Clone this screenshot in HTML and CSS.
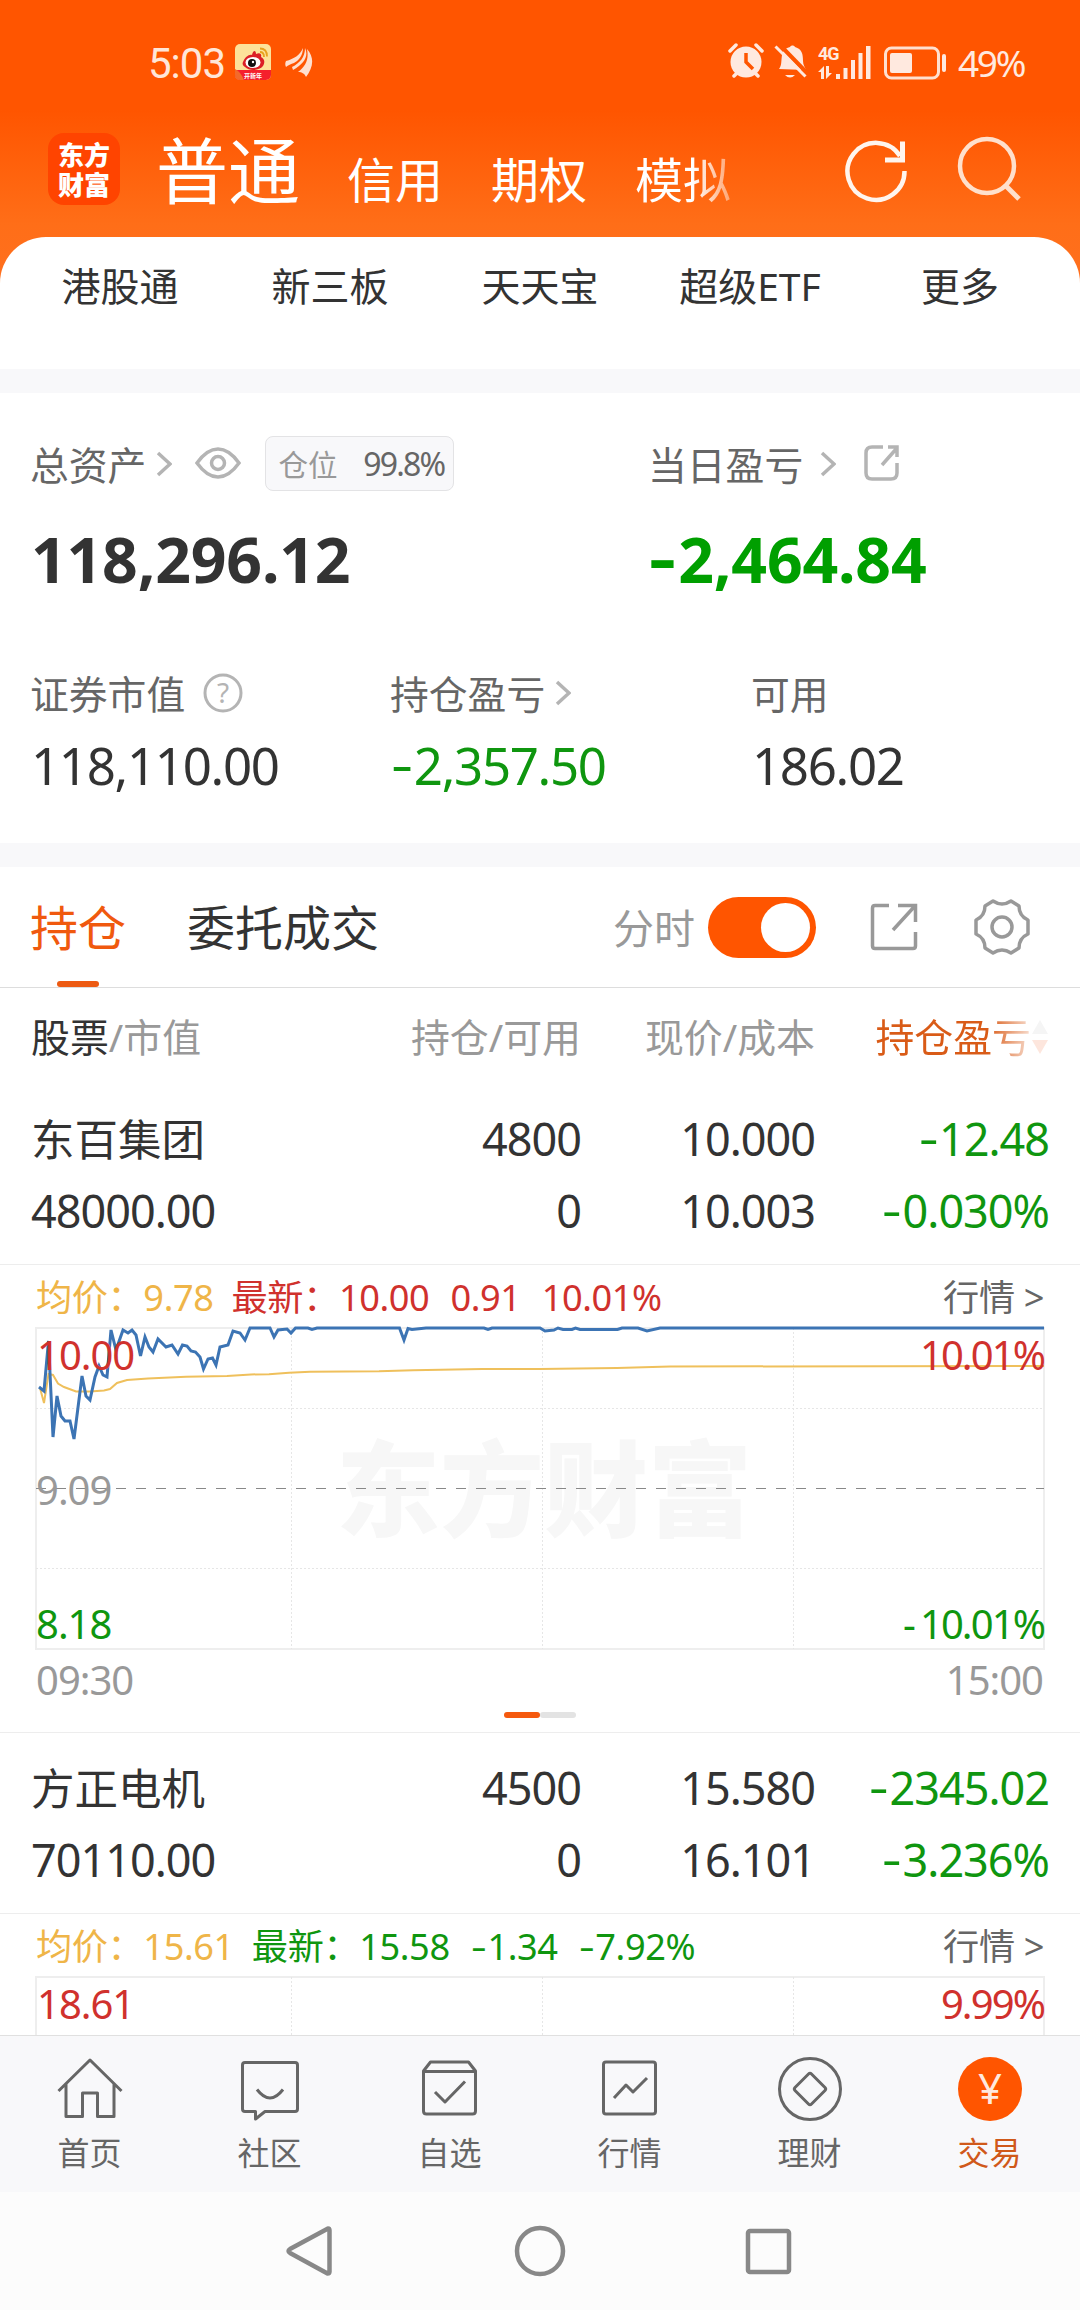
FILE: index.html
```html
<!DOCTYPE html>
<html lang="zh-CN">
<head>
<meta charset="utf-8">
<title>交易</title>
<link rel="stylesheet" href="styles.css">
</head>
<body>
<div class="screen">
  <header class="top">
    <div class="status">
      <span class="clock">5:03</span>
      <svg class="weibo" width="36" height="36" viewBox="0 0 36 36">
        <defs><clipPath id="wb"><rect width="36" height="36" rx="5"/></clipPath></defs>
        <g clip-path="url(#wb)">
          <rect width="36" height="36" fill="#fde29a"/>
          <path d="M0 26h36v10H0z" fill="#f5202c"/>
          <path d="M0 25q6 3 9 11H0z" fill="#f36a2a"/>
          <path d="M8 18c2-5 6-8 9-7 1-5 4-5 4-1 4-2 6 0 5 3 4 2 4 6 2 9-4 5-14 5-18 1-2-1-3-3-2-5z" fill="#dc1f26"/>
          <ellipse cx="18" cy="18.500" rx="7.500" ry="5.500" fill="#fff"/>
          <circle cx="17" cy="19" r="4" fill="#111"/><circle cx="18" cy="18" r="1.200" fill="#fff"/>
          <path d="M25 8q4 0 4 5M25 4.500q7 0 7 8" fill="none" stroke="#e8a21f" stroke-width="1.800"/>
        </g>
        <text x="18" y="33.500" class="weibo-text">开新年</text>
      </svg>
      <svg class="leaf" width="28" height="32" viewBox="0 0 28 32">
        <path d="M1 14C9 12 15 8 18 1c0 8-5 13-9 15-3 1-6 2-8 4-1-2-1-4 0-6z M20 1c4 8-1 16-12 22l-1-3C15 16 20 10 20 1z M22 2c8 9 6 19-1 28-1-3-4-5-8-5 8-6 11-13 9-23z"/>
      </svg>
      <div class="status-right">
        <svg width="310" height="50" viewBox="0 -6 310 50" fill="#ffe9df">
          <!-- alarm -->
          <circle cx="18" cy="20" r="15.500"/>
          <path d="M2 9L8 3M28 3l6 6M6 34l5-5M30 34l-5-5" stroke="#ffe9df" stroke-width="3.500" stroke-linecap="round"/>
          <path d="M18 11v9l7 7" stroke="#ff5500" stroke-width="3.500" fill="none"/>
          <!-- muted bell -->
          <path d="M51 27c3-4 2-8 3-14 1-5 4-7 8-8 1-2 4-2 5 0 7 2 8 7 8 14 0 4 2 6 3 9z"/>
          <path d="M57 33h10q-5 5-10 0z"/>
          <path d="M50 1l31 32" stroke="#ff5500" stroke-width="4"/>
          <path d="M47.500 4.500l30 30" stroke="#ffe9df" stroke-width="3"/>
          <text x="90" y="18" class="net">4G</text>
          <path d="M90 30l6-6v13h-3v-7zM98 24h3v7h3l-6 6zM108 32h4v5h-4z"/>
          <path d="M115.500 26h4v11h-4zM123 18h4v19h-4zM130.500 11h4v26h-4zM138 4h4.500v33H138z"/>
          <rect x="157.500" y="6" width="53" height="30" rx="6" fill="none" stroke="#ffe0cf" stroke-width="3"/>
          <rect x="162" y="11" width="22" height="20" rx="2"/>
          <rect x="214" y="12" width="4" height="18" rx="2"/>
          <text x="230" y="35" class="battery">49%</text>
        </svg>
      </div>
    </div>
    <div class="titlebar">
      <div class="logo">东方<br>财富</div>
      <nav class="modes">
        <span class="mode active">普通</span><span class="mode">信用</span><span class="mode">期权</span><span class="mode last">模拟</span>
      </nav>
      <svg class="actions" width="190" height="70" viewBox="0 0 190 70" fill="none">
        <path d="M63.500 36A28.500 28.500 0 1 1 59 21" stroke="#fff5ee" stroke-width="4.500"/>
        <path d="M61.500 6.500v18.500H44" stroke="#fff5ee" stroke-width="5"/>
        <circle cx="146" cy="31" r="27" stroke="#ffe0cc" stroke-width="4.500"/>
        <path d="M165 51l13 13" stroke="#ffe0cc" stroke-width="5"/>
      </svg>
    </div>
  </header>

  <main class="content">
    <nav class="shortcuts"><span>港股通</span><span>新三板</span><span>天天宝</span><span>超级ETF</span><span>更多</span></nav>

    <section class="assets">
      <div class="totals">
        <div class="total">
          <div class="label">总资产
            <svg class="chev near" viewBox="0 0 16 26"><path d="M2 2l12 11L2 24"/></svg>
            <svg class="eye" viewBox="0 0 46 32"><path d="M2 16Q12 2 23 2t21 14Q34 30 23 30T2 16z"/><circle cx="23" cy="16" r="6.500"/></svg>
            <span class="badge"><span>仓位</span><b>99.8%</b></span>
          </div>
          <div class="big">118,296.12</div>
        </div>
        <div class="total">
          <div class="label">当日盈亏
            <svg class="chev far" viewBox="0 0 16 26"><path d="M2 2l12 11L2 24"/></svg>
            <svg class="share-s" viewBox="0 0 36 36"><path d="M19 2H8Q2 2 2 8v20q0 6 6 6h19q6 0 6-6V18M18 20L33 3M24 2h9v10"/></svg>
          </div>
          <div class="big green"><i class="neg">-</i>2,464.84</div>
        </div>
      </div>
      <div class="stats">
        <div><div class="label">证券市值
          <svg class="help" viewBox="0 0 40 40"><circle cx="20" cy="20" r="18"/><text x="20" y="29.500">?</text></svg></div>
          <div class="value">118,110.00</div></div>
        <div><div class="label">持仓盈亏
          <svg class="chev near" viewBox="0 0 16 26"><path d="M2 2l12 11L2 24"/></svg></div>
          <div class="value green"><i class="neg">-</i>2,357.50</div></div>
        <div><div class="label">可用</div><div class="value">186.02</div></div>
      </div>
    </section>

    <section class="positions">
      <div class="tabs">
        <span class="tab on">持仓</span><span class="tab">委托成交</span>
        <span class="timeline">分时</span><span class="switch"></span>
        <svg class="share-l" viewBox="0 0 48 48"><path d="M19 2.500H5q-2.500 0-2.500 2.500v38q0 2.500 2.500 2.500h38q2.500 0 2.500-2.500V29M23 27L44 4M28 2.500h17.500V19"/></svg>
        <svg class="gear" viewBox="0 0 56 56"><path d="M19 2q9 6 18 0l8 5q0 10 9 14v14q-9 4-9 14l-8 5q-9-6-18 0l-8-5q0-10-9-14V21q9-4 9-14z"/><circle cx="28" cy="28" r="10"/></svg>
      </div>
      <div class="cols head">
        <span><em>股票</em>/市值</span><span>持仓/可用</span><span>现价/成本</span>
        <span class="sorted"><strong>持仓盈亏</strong><svg width="18" height="36" viewBox="0 0 18 36"><path d="M9 1l8 14H1z" fill="#f5f5f5"/><path d="M9 35L1 21h16z" fill="#fde6dd"/></svg></span>
      </div>

      <article class="holding">
        <div class="cols row"><span class="name">东百集团</span><span>4800</span><span>10.000</span><span class="green"><i class="neg">-</i>12.48</span></div>
        <div class="cols row"><span>48000.00</span><span>0</span><span>10.003</span><span class="green"><i class="neg">-</i>0.030%</span></div>
      </article>
      <div class="quote">
        <div class="legend"><span class="avg">均价：9.78</span><span class="red">最新：10.00</span><span class="red">0.91</span><span class="red">10.01%</span><span class="more">行情 &gt;</span></div>
        <svg class="chart" width="1080" height="392" viewBox="0 0 1080 392">
          <text x="336" y="209" class="mark">东方财富</text>
          <path class="frame" d="M36 8h1008v321H36z"/>
          <path class="grid" d="M36 88.500h1008M36 248.500h1008M291.500 8v321M542.500 8v321M793.500 8v321"/>
          <path class="mid" d="M36 168.500h1008"/>
          <path class="avgline" d="M40 68L44 83L48.500 54L53 55L58 63.500L64 67L76 71.500L90 71.500L104 70.500L110 69L117 63L127 60L148 58.500L186 56.700L227 56L251 54.400L269 54.300L289 52.700L310 51.700L379 51.300L413 50.300L482 49L540 49L617 48L670 46.500L1044 46"/>
          <path class="price" d="M39 67L44 71L48.500 21L53 117L57 76L61 96L65 101L70 101L74 119L82 56L86 76L90 80L95 57L99 46L103 55L107 57L111 10L116 30L123 10L128 13L132 10L136 15L140.500 36L145 17L149 27L153 32L158 19L166 27L172 25L178 34L182.500 25L187 26L191 31L195.500 32L200 37L203.500 49L208 39L212.500 38L216 45L220 27L228 25L233 11L240 13L245 20L250 8L270 8L274 17L278 10L287 9L291 13L295.500 8L308 8L312 9.500L317 8L399.500 8L404 20L408 8.500L412 9.500L426 8L484 8L488 9.500L492 8L540 8L545 11L554 10L558 8L563 9.500L572 9.500L575.500 8L580 9.500L617.500 9.500L622 8L638 8L647 11L660 8L1044 8"/>
          <g class="axis">
            <text x="37" y="50" class="r">10.00</text><text x="36" y="185" class="g">9.09</text><text x="36" y="319" class="n">8.18</text><text x="36" y="375" class="g">09:30</text>
            <g text-anchor="end"><text x="1044" y="50" class="r pct">10.01%</text><text x="1044" y="319" class="n pct"><tspan class="dash">-</tspan>10.01%</text><text x="1043" y="375" class="g">15:00</text></g>
          </g>
        </svg>
        <div class="pager"><i></i><i></i></div>
      </div>

      <article class="holding">
        <div class="cols row"><span class="name">方正电机</span><span>4500</span><span>15.580</span><span class="green"><i class="neg">-</i>2345.02</span></div>
        <div class="cols row"><span>70110.00</span><span>0</span><span>16.101</span><span class="green"><i class="neg">-</i>3.236%</span></div>
      </article>
      <div class="quote">
        <div class="legend"><span class="avg">均价：15.61</span><span class="green">最新：15.58</span><span class="green"><i class="neg">-</i>1.34</span><span class="green"><i class="neg">-</i>7.92%</span><span class="more">行情 &gt;</span></div>
        <svg class="chart" width="1080" height="66" viewBox="0 0 1080 66">
          <path class="frame" d="M36 80V8h1008v72"/>
          <path class="grid" d="M291.500 8v70M542.500 8v70M793.500 8v70"/>
          <g class="axis"><text x="37" y="50" class="r">18.61</text><text x="1044" y="50" class="r pct" text-anchor="end">9.99%</text></g>
        </svg>
      </div>
    </section>
  </main>

  <nav class="tabbar">
    <div><svg viewBox="0 0 68 68"><path d="M2.500 36L34 5l31.500 31M10 29v32.500h16.500V38h15v23.500H58V29"/></svg>首页</div>
    <div><svg viewBox="0 0 68 68"><path d="M9 7.500h50q2.500 0 2.500 2.500v44q0 2.500-2.500 2.500H29l-9.500 7.500V56.500H9q-2.500 0-2.500-2.500V10q0-2.500 2.500-2.500zM21 34.500q13 17 26 0"/></svg>社区</div>
    <div><svg viewBox="0 0 68 68"><path d="M7.500 16l7-9h38l7 9v40q0 3-3 3h-46q-3 0-3-3zM7.500 16.500h52M19 37l10 10 20-20.500"/></svg>自选</div>
    <div><svg viewBox="0 0 68 68"><rect x="7.500" y="7" width="52" height="52" rx="2.500"/><path d="M18 43l12-13 7 7 14-14"/></svg>行情</div>
    <div><svg viewBox="0 0 68 68"><circle cx="34" cy="34" r="30.500"/><path d="M32.500 19q1.500-1.500 3 0l13.500 13.500q1.500 1.500 0 3L35.500 49q-1.500 1.500-3 0L19 35.500q-1.500-1.500 0-3z"/></svg>理财</div>
    <div class="current"><svg viewBox="0 0 68 68"><circle cx="34" cy="34" r="32"/><text x="34" y="49">¥</text></svg>交易</div>
  </nav>

  <footer class="sysnav">
    <svg viewBox="0 0 52 52"><path d="M43 3.500q1.500 0 1.500 2v41q0 2-2 2L5 28q-3-2 0-4z"/></svg>
    <svg viewBox="0 0 52 52"><circle cx="26" cy="26" r="23"/></svg>
    <svg viewBox="0 0 52 52"><rect x="5" y="6" width="41" height="41" rx="2"/></svg>
  </footer>
</div>
</body>
</html>
```
FILE: styles.css
```css
* { box-sizing: border-box; }
body {
  margin: 0;
  font-family: "Noto Sans", "Noto Sans CJK SC", sans-serif;
  color: #333;
}
svg { flex: none; display: block; }
.green { color: #0f960f; }
.red { color: #d0312d; }

/* Minus sign, drawn a little wider and higher than the plain hyphen */
.neg {
  display: inline-block;
  font-style: normal;
  transform: translateY(-.04em) scaleX(1.35);
  transform-origin: left;
  margin-right: .15em;
}

.screen {
  width: 1080px;
  height: 2310px;
  display: flex;
  flex-direction: column;
  overflow: hidden;
  background: linear-gradient(#ff5500 0, #ff5500 110px, #ff6e18 225px, #ff7020 300px);
}

/* Header */
.top { height: 237px; flex: none; }
.status { height: 125px; padding-left: 148px; display: flex; align-items: flex-start; }
.clock { width: 87px; font-size: 42px; line-height: 128px; letter-spacing: -1px; color: #ffe6d8; font-family: Roboto, sans-serif; }
.weibo { margin-top: 44px; }
.weibo-text { font-size: 6px; font-weight: 700; fill: #fff; text-anchor: middle; }
.leaf { margin: 47px 0 0 14px; fill: #ffe0cf; }
.status-right { margin: 36px 42px 0 auto; }
.net { font: 700 18px Roboto, sans-serif; letter-spacing: -1px; }
.battery { font: 37px "Noto Sans", sans-serif; letter-spacing: -2.300px; }
.titlebar { display: flex; padding-left: 48px; height: 100px; }
.logo {
  width: 72px; height: 72px; margin-top: 8px; padding-top: 6px;
  border-radius: 16px; background: #ff4400; color: #fff; text-align: center;
  font: 900 26px/30px "Noto Sans CJK SC", sans-serif;
}
.modes { display: flex; align-items: baseline; gap: 48px; width: 660px; margin: -7px 0 0 36px; color: #fff; font-size: 48px; line-height: 104px; }
.mode.last {
  color: transparent;
  background: linear-gradient(90deg, #fff 60%, rgba(255,255,255,.4) 100%);
  -webkit-background-clip: text;
  background-clip: text;
}
.mode.active { font-size: 72px; margin-right: -1px; }
.actions { margin: 10px 0 0 25px; }

/* Content */
.content { height: 1798px; flex: none; overflow: hidden; background: #fff; border-radius: 46px 46px 0 0; }
.shortcuts { height: 132px; padding: 0 15px; display: grid; grid-template-columns: repeat(5, 1fr); text-align: center; font-size: 39px; line-height: 97px; }
.assets { height: 498px; border: solid #f8f8fa; border-width: 24px 0; background: #fff; }
.totals { display: grid; grid-template-columns: 618px 1fr; padding: 42px 0 0 30px; }
.totals .label { margin-top: -2px; }
.stats { display: grid; grid-template-columns: 360px 361px 1fr; padding: 52px 0 0 30px; }
.label { display: flex; align-items: center; height: 60px; font-size: 38.800px; color: #666; white-space: nowrap; }
.chev { width: 16px; height: 26px; margin-top: 1px; fill: none; stroke: #b4b4b4; stroke-width: 3.500; }
.chev.near { margin-left: 10px; }
.chev.far { margin-left: 17px; }
.eye { width: 46px; height: 32px; margin-left: 23px; fill: none; stroke: #b4b4b4; stroke-width: 3.500; }
.share-s { width: 36px; height: 36px; margin-left: 28px; fill: none; stroke: #b4b4b4; stroke-width: 3.500; }
.help { width: 40px; height: 40px; margin: 2px 0 0 18px; fill: none; stroke: #b4b4b4; stroke-width: 3; }
.help text { font-size: 28px; fill: #b4b4b4; stroke: none; text-anchor: middle; }
.badge {
  display: flex; align-items: center; justify-content: space-between;
  width: 189px; height: 55px; margin-left: 24px; padding: 0 9px 0 12px;
  border: 1px solid #e3e3e5; border-radius: 8px; background: #f8f8fa;
  font-size: 29.500px; color: #999;
}
.badge b { font-weight: 400; font-size: 32px; color: #666; letter-spacing: -1.800px; }
.big { font-size: 62.500px; line-height: 102px; font-weight: 700; letter-spacing: -.2px; margin: 15px 0 0 1px; }
.big.green { color: #009f00; }
.value { font-size: 51px; line-height: 84px; letter-spacing: -1.300px; margin: 1px 0 0 1px; }

/* Positions */
.tabs { display: flex; align-items: center; height: 121px; padding-left: 30px; border-bottom: 1px solid #ddd; font-size: 48px; }
.tab { height: 120px; line-height: 122px; margin-right: 61px; }
.tab.on { color: #f0590e; position: relative; }
.tab.on::after { content: ""; position: absolute; left: 27px; bottom: 0; width: 42px; height: 6px; border-radius: 3px; background: #ed5a12; }
.timeline { margin: -3px 0 0 auto; font-size: 41px; color: #999; }
.switch { width: 108px; height: 61px; margin-left: 13px; padding: 6px; border-radius: 31px; background: #ff5500; display: flex; justify-content: flex-end; }
.switch::before { content: ""; width: 49px; height: 49px; border-radius: 50%; background: #fff; }
.share-l { width: 48px; height: 48px; margin-left: 54px; fill: none; stroke: #999; stroke-width: 3.500; }
.gear { width: 56px; height: 56px; margin: 0 50px 0 56px; fill: none; stroke: #999; stroke-width: 3.500; stroke-linejoin: round; }

.cols { display: grid; grid-template-columns: 300px 250px 234px 234px; padding-left: 31px; text-align: right; white-space: nowrap; }
.cols > :first-child { text-align: left; }
.head { height: 96px; line-height: 98px; font-size: 38.900px; color: #999; }
.head em { font-style: normal; color: #333; }
.sorted { display: flex; justify-content: flex-end; align-items: center; }
.sorted strong {
  font-weight: 400; color: transparent;
  background: linear-gradient(90deg, #d95b17 72%, rgba(217,91,23,.2) 100%);
  -webkit-background-clip: text;
  background-clip: text;
}
.holding { padding: 19px 0 17px; border-bottom: 1px solid #ededed; }
.row { height: 72px; line-height: 72px; font-size: 45px; letter-spacing: -1px; }
.row .name { font-size: 43.500px; letter-spacing: 0; }

.legend { display: flex; gap: 21px; height: 55px; padding: 0 36px; font-size: 36.200px; line-height: 64px; letter-spacing: -.4px; white-space: nowrap; }
.avg { color: #efb548; margin-right: -3px; }
.more { margin-left: auto; color: #666; }
.quote { border-bottom: 1px solid #ededed; }
.frame { fill: none; stroke: #eee; stroke-width: 2; }
.grid { fill: none; stroke: #e6e6e6; stroke-width: 1; stroke-dasharray: 2 2; }
.mid { stroke: #888; stroke-width: 1; stroke-dasharray: 10 10; }
.avgline { fill: none; stroke: #efc05c; stroke-width: 2; }
.price { fill: none; stroke: #3c74b4; stroke-width: 3; }
.mark { font: 900 104px "Noto Sans CJK SC", sans-serif; fill: #f7f7f7; }
.axis { font-size: 40px; letter-spacing: -1px; }
.axis .pct { letter-spacing: -1.900px; }
.axis .dash { letter-spacing: 4px; }
.axis .r { fill: #d0312d; }
.axis .g { fill: #999; }
.axis .n { fill: #0f960f; }
.pager { display: flex; justify-content: center; padding-bottom: 14px; }
.pager i { width: 36px; height: 6px; border-radius: 3px; background: #e3e3e3; }
.pager i:first-child { background: #f5590e; }

/* Bottom tab bar */
.tabbar { height: 157px; flex: none; display: grid; grid-template-columns: repeat(6, 1fr); border-top: 1px solid #e0e0e0; background: #f8f8fa; }
.tabbar div { display: flex; flex-direction: column; align-items: center; padding: 19px 1px 0 0; font-size: 32px; line-height: 62px; color: #666; }
.tabbar svg { width: 68px; height: 68px; margin-bottom: -1px; fill: none; stroke: #666; stroke-width: 3; stroke-linejoin: round; }
.tabbar .current { color: #d0591a; }
.tabbar .current svg { fill: #ff5500; stroke: none; }
.tabbar .current text { font-size: 42px; fill: #ffe9df; text-anchor: middle; }

/* System navigation */
.sysnav { flex: 1; display: flex; justify-content: center; gap: 177px; padding-top: 33px; background: #fcfcfc; }
.sysnav svg { width: 52px; height: 52px; fill: none; stroke: #888; stroke-width: 4.500; stroke-linejoin: round; }
```
